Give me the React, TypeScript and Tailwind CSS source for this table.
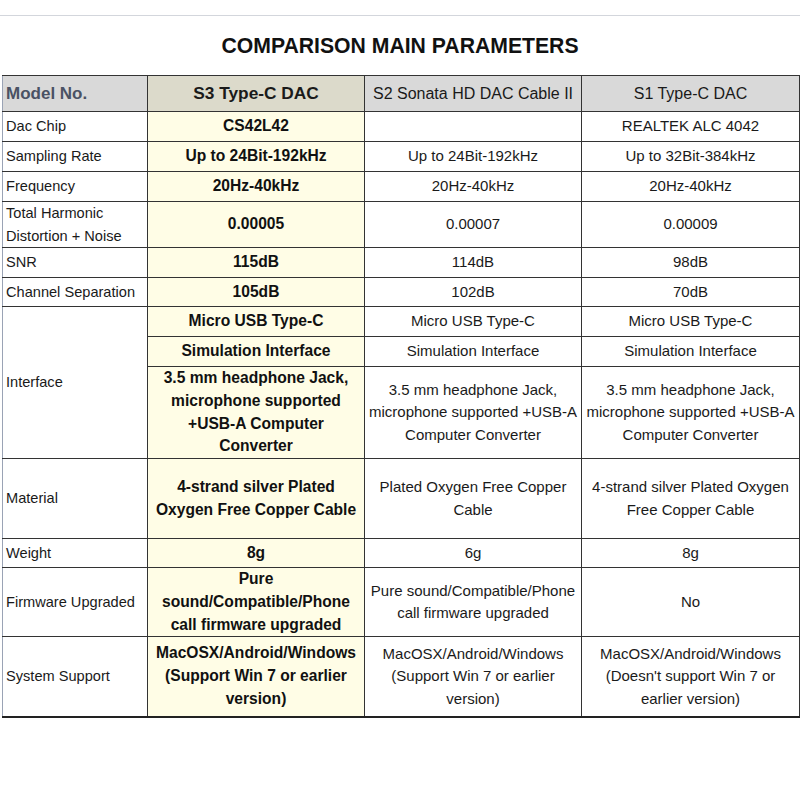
import React from "react";

const F = { fontFamily: '"Liberation Sans", Arial, sans-serif' };

type Cell = React.ReactNode;

function L({ lines }: { lines: string[] }) {
  return (
    <>
      {lines.map((l, i) => (
        <React.Fragment key={i}>
          {i > 0 && <br />}
          {l}
        </React.Fragment>
      ))}
    </>
  );
}

const bd = "border border-[#333]";
const c1 = `${bd} border-l-[#9aa3b5] pl-[3px] pr-[4px] text-left align-middle text-[14.6px] leading-[22.5px] text-[#1a1a1a] whitespace-nowrap`;
const c2 = `${bd} bg-[#fffde6] px-0 text-center align-middle text-[15.6px] font-bold leading-[22.75px] text-[#111] whitespace-nowrap`;
const c3 = `${bd} px-0 text-center align-middle text-[15px] leading-[22.5px] text-[#1a1a1a] whitespace-nowrap`;

type Row = { h: number; a?: Cell; b: Cell; c: Cell; d: Cell; span?: number };

const rows: Row[] = [
  { h: 30, a: "Dac Chip", b: "CS42L42", c: "", d: "REALTEK ALC 4042" },
  { h: 30, a: "Sampling Rate", b: "Up to 24Bit-192kHz", c: "Up to 24Bit-192kHz", d: "Up to 32Bit-384kHz" },
  { h: 30, a: "Frequency", b: "20Hz-40kHz", c: "20Hz-40kHz", d: "20Hz-40kHz" },
  {
    h: 46,
    a: <L lines={["Total Harmonic", "Distortion + Noise"]} />,
    b: "0.00005",
    c: "0.00007",
    d: "0.00009",
  },
  { h: 30, a: "SNR", b: "115dB", c: "114dB", d: "98dB" },
  { h: 29, a: "Channel Separation", b: "105dB", c: "102dB", d: "70dB" },
  { h: 30, a: "Interface", span: 3, b: "Micro USB Type-C", c: "Micro USB Type-C", d: "Micro USB Type-C" },
  { h: 30, b: "Simulation Interface", c: "Simulation Interface", d: "Simulation Interface" },
  {
    h: 91,
    b: <L lines={["3.5 mm headphone Jack,", "microphone supported", "+USB-A Computer", "Converter"]} />,
    c: <L lines={["3.5 mm headphone Jack,", "microphone supported +USB-A", "Computer Converter"]} />,
    d: <L lines={["3.5 mm headphone Jack,", "microphone supported +USB-A", "Computer Converter"]} />,
  },
  {
    h: 80,
    a: "Material",
    b: <L lines={["4-strand silver Plated", "Oxygen Free Copper Cable"]} />,
    c: <L lines={["Plated Oxygen Free Copper", "Cable"]} />,
    d: <L lines={["4-strand silver Plated Oxygen", "Free Copper Cable"]} />,
  },
  { h: 29, a: "Weight", b: "8g", c: "6g", d: "8g" },
  {
    h: 69,
    a: "Firmware Upgraded",
    b: <L lines={["Pure", "sound/Compatible/Phone", "call firmware upgraded"]} />,
    c: <L lines={["Pure sound/Compatible/Phone", "call firmware upgraded"]} />,
    d: "No",
  },
  {
    h: 80,
    a: "System Support",
    b: <L lines={["MacOSX/Android/Windows", "(Support Win 7 or earlier", "version)"]} />,
    c: <L lines={["MacOSX/Android/Windows", "(Support Win 7 or earlier", "version)"]} />,
    d: <L lines={["MacOSX/Android/Windows", "(Doesn't support Win 7 or", "earlier version)"]} />,
  },
];

export default function App() {
  return (
    <div className="w-[800px] h-[800px] bg-white overflow-hidden" style={F}>
      <div className="pt-[15px]">
        <div className="h-px bg-[#d3d6dc]" />
      </div>
      <h1 className="mt-[18px] text-center text-[21.2px] leading-[24px] font-bold text-[#111]">
        COMPARISON MAIN PARAMETERS
      </h1>
      <table className="mt-[17px] ml-[2px] w-[797px] table-fixed border-collapse border-b-2 border-b-[#222]">
        <colgroup>
          <col className="w-[145px]" />
          <col className="w-[217px]" />
          <col className="w-[217px]" />
          <col className="w-[218px]" />
        </colgroup>
        <thead>
          <tr className="h-[36px]">
            <th className={`${bd} border-l-[#9aa3b5] bg-[#d9d9d9] pl-[3px] pr-[4px] text-left align-middle text-[17px] font-bold text-[#4a5264]`}>
              Model No.
            </th>
            <th className={`${bd} bg-[#dcdacb] text-center align-middle text-[17.3px] font-bold text-[#1a1a1a]`}>
              S3 Type-C DAC
            </th>
            <th className={`${bd} bg-[#d9d9d9] text-center align-middle text-[16px] font-normal text-[#1a1a1a] whitespace-nowrap`}>
              S2 Sonata HD DAC Cable II
            </th>
            <th className={`${bd} bg-[#d9d9d9] text-center align-middle text-[16px] font-normal text-[#1a1a1a]`}>
              S1 Type-C DAC
            </th>
          </tr>
        </thead>
        <tbody>
          {rows.map((r, i) => (
            <tr key={i} style={{ height: r.h }}>
              {r.a !== undefined && (
                <td className={`${c1} ${i === rows.length - 1 ? "border-b-2 border-b-[#222]" : ""}`} rowSpan={r.span ?? 1}>
                  {r.a}
                </td>
              )}
              <td className={`${c2} ${i === rows.length - 1 ? "border-b-2 border-b-[#222]" : ""}`}>{r.b}</td>
              <td className={`${c3} ${i === rows.length - 1 ? "border-b-2 border-b-[#222]" : ""}`}>{r.c}</td>
              <td className={`${c3} ${i === rows.length - 1 ? "border-b-2 border-b-[#222]" : ""}`}>{r.d}</td>
            </tr>
          ))}
        </tbody>
      </table>
    </div>
  );
}
